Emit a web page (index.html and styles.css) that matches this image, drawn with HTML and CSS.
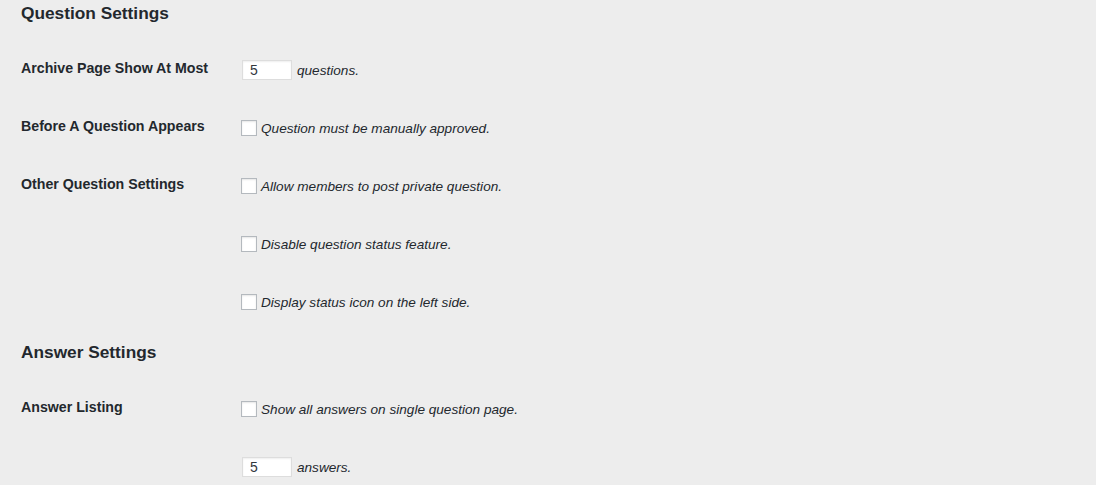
FILE: index.html
```html
<!DOCTYPE html>
<html lang="en">
<head>
    <meta charset="UTF-8">
    <title>Question Settings</title>
    <link rel="stylesheet" href="styles.css">
</head>
<body>

    <!-- Question settings -->
    <div class="settings">
        <h2>Question Settings</h2>
        <div class="form-table">
            <div class="row">
                <div class="label">Archive Page Show At Most</div>
                <div class="field">
                    <input type="text" class="small-text" value="5">
                    <span class="desc">questions.</span>
                </div>
            </div>
            <div class="row">
                <div class="label">Before A Question Appears</div>
                <div class="field">
                    <span class="check"></span>
                    <span class="desc">Question must be manually approved.</span>
                </div>
            </div>
            <div class="row">
                <div class="label">Other Question Settings</div>
                <div class="field">
                    <span class="check"></span>
                    <span class="desc">Allow members to post private question.</span>
                </div>
            </div>
            <div class="row">
                <div class="label"></div>
                <div class="field">
                    <span class="check"></span>
                    <span class="desc">Disable question status feature.</span>
                </div>
            </div>
            <div class="row">
                <div class="label"></div>
                <div class="field">
                    <span class="check"></span>
                    <span class="desc">Display status icon on the left side.</span>
                </div>
            </div>
        </div>

        <!-- Answer settings -->
        <h2>Answer Settings</h2>
        <div class="form-table">
            <div class="row">
                <div class="label">Answer Listing</div>
                <div class="field">
                    <span class="check"></span>
                    <span class="desc">Show all answers on single question page.</span>
                </div>
            </div>
            <div class="row">
                <div class="label"></div>
                <div class="field">
                    <input type="text" class="small-text" value="5">
                    <span class="desc">answers.</span>
                </div>
            </div>
        </div>
    </div>

</body>
</html>
```

FILE: styles.css
```css
body {
    margin: 0;
    background-color: #ededed;
    color: #23282d;
    font-family: "Liberation Sans", Arial, sans-serif;
    font-size: 13px;
    overflow: hidden;
}

.settings {
    padding-left: 21px;
}

.settings h2 {
    font-size: 17.3px;
    font-weight: bold;
    line-height: 22px;
    margin: 12px 0 15px;
}

.settings h2:first-child {
    margin-top: 2px;
}

.form-table {
    display: flex;
    flex-direction: column;
}

.row {
    display: grid;
    grid-template-columns: 220px 1fr;
    height: 58px;
    align-items: center;
}

.label {
    font-size: 14.2px;
    font-weight: bold;
    line-height: 18px;
}

.field {
    display: flex;
    align-items: center;
    gap: 4px;
    padding-top: 4px;
}

.small-text {
    width: 50px;
    height: 20px;
    box-sizing: border-box;
    margin: 0 1px 0 1px;
    padding: 0 7px;
    border: 1px solid #dddddd;
    background-color: #fff;
    box-shadow: inset 0 1px 2px rgba(0, 0, 0, 0.07);
    font-family: "Liberation Sans", Arial, sans-serif;
    font-size: 14px;
    color: #32373c;
    outline: none;
}

.check {
    width: 16px;
    height: 16px;
    box-sizing: border-box;
    border: 1px solid #b4b9be;
    background-color: #fff;
    box-shadow: inset 0 1px 2px rgba(0, 0, 0, 0.1);
}

.desc {
    font-style: italic;
    font-size: 13.6px;
    line-height: 18px;
    padding-top: 2px;
    color: #23282d;
}
```
